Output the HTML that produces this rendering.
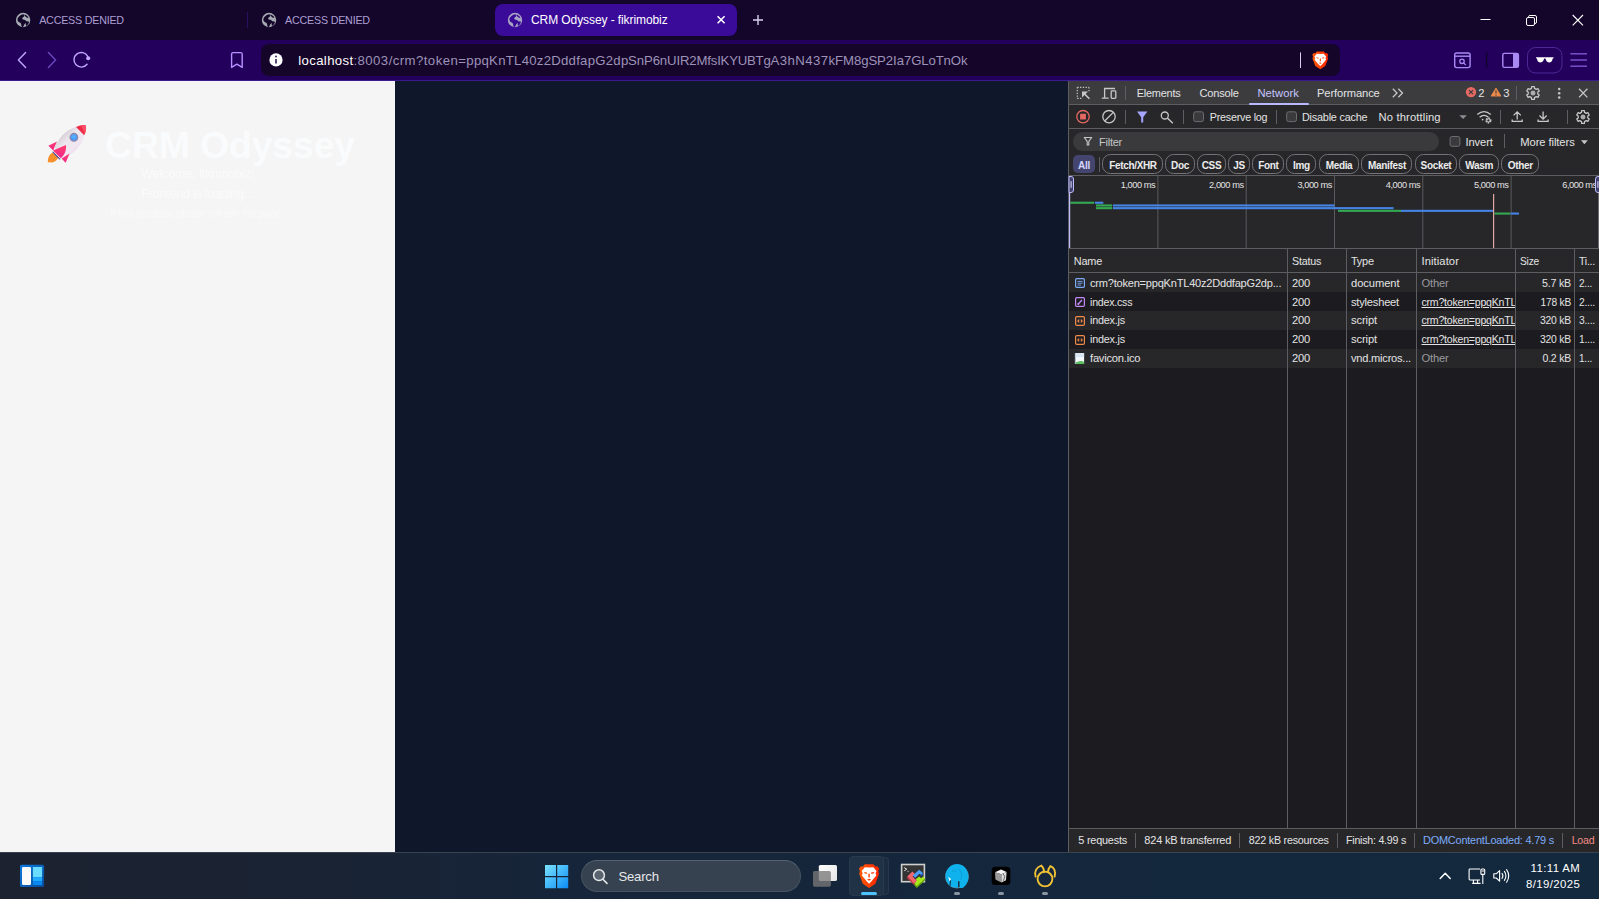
<!DOCTYPE html>
<html lang="en"><head><meta charset="utf-8"><title>CRM Odyssey - fikrimobiz</title><style>
html,body{margin:0;padding:0;}
body{width:1599px;height:899px;overflow:hidden;position:relative;background:#14052a;font-family:"Liberation Sans",sans-serif;}
.b{position:absolute;display:block;box-sizing:border-box;}
.t{position:absolute;display:block;white-space:nowrap;overflow:visible;}
</style></head><body>
<div class="b" style="left:0px;top:0px;width:1599px;height:40px;background:#14052a;"></div>
<div class="b" style="left:0px;top:40px;width:1599px;height:41px;background:#22005c;"></div>
<div class="b" style="left:0px;top:80px;width:1599px;height:1px;background:#3a1a8c;"></div>
<div class="b" style="left:495px;top:4px;width:242px;height:32px;background:#3a0a99;border-radius:8px;"></div>
<div class="b" style="left:247px;top:12px;width:1px;height:16px;background:#2a1060;"></div>
<div class="b" style="left:261px;top:44px;width:1079px;height:32px;background:#150529;border-radius:8px;"></div>
<span class="t" style="left:39.20px;top:12px;height:16px;line-height:16px;font-size:10.73px;color:#ac9fd2;letter-spacing:-0.219px;">ACCESS DENIED</span>
<span class="t" style="left:285.00px;top:12px;height:16px;line-height:16px;font-size:10.76px;color:#ac9fd2;letter-spacing:-0.223px;">ACCESS DENIED</span>
<span class="t" style="left:531.00px;top:11px;height:18px;line-height:18px;font-size:12px;color:#ffffff;letter-spacing:-0.087px;">CRM Odyssey - fikrimobiz</span>
<span class="t" style="left:298.3px;top:51px;height:19px;line-height:19px;font-size:13.2px;"><span style="color:#ffffff;letter-spacing:0.345px;">localhost</span><span style="color:#9d93b8;letter-spacing:0.435px;">:8003/crm?token=</span><span style="color:#9d93b8;letter-spacing:0.249px;">ppqKnTL40z2DddfapG2d</span><span style="color:#9d93b8;letter-spacing:-0.135px;">pSnP6nUIR2</span><span style="color:#9d93b8;letter-spacing:-0.218px;">MfsIKYUBTg</span><span style="color:#9d93b8;letter-spacing:0.422px;">A3hN437</span><span style="color:#9d93b8;letter-spacing:-0.086px;">kFM8gSP2Ia7</span><span style="color:#9d93b8;letter-spacing:-0.132px;">GLoTnOk</span></span>
<div class="b" style="left:0px;top:81px;width:395px;height:771px;background:#f5f5f5;"></div>
<div class="b" style="left:395px;top:81px;width:673px;height:771px;background:#0f172a;"></div>
<span class="t" style="left:105.00px;top:122px;height:46px;line-height:46px;font-size:37.54px;color:#fafbfc;letter-spacing:-0.222px;font-weight:700;">CRM Odyssey</span>
<span class="t" style="left:141.00px;top:164px;height:19px;line-height:19px;font-size:12.75px;color:#fafbfc;letter-spacing:-0.219px;">Welcome, fikrimobiz!</span>
<span class="t" style="left:141.50px;top:185px;height:18px;line-height:18px;font-size:12.51px;color:#fafbfc;letter-spacing:-0.220px;">Frontend is loading...</span>
<span class="t" style="left:110.00px;top:205px;height:16px;line-height:16px;font-size:10.5px;color:#f9fafb;letter-spacing:-0.221px;">If this persists, please refresh the page.</span>
<div class="b" style="left:1068px;top:81px;width:1px;height:771px;background:#5e5e62;"></div>
<div class="b" style="left:1069px;top:81px;width:530px;height:23px;background:#3c3c3f;"></div>
<div class="b" style="left:1069px;top:104px;width:530px;height:1px;background:#5e5e62;"></div>
<div class="b" style="left:1069px;top:105px;width:530px;height:23px;background:#27272a;"></div>
<div class="b" style="left:1069px;top:128px;width:530px;height:1px;background:#5e5e62;"></div>
<div class="b" style="left:1069px;top:129px;width:530px;height:47px;background:#27272a;"></div>
<div class="b" style="left:1069px;top:175px;width:530px;height:1px;background:#5e5e62;"></div>
<div class="b" style="left:1069px;top:176px;width:530px;height:72px;background:#27272a;"></div>
<div class="b" style="left:1069px;top:248px;width:530px;height:1px;background:#5e5e62;"></div>
<div class="b" style="left:1069px;top:249px;width:530px;height:23px;background:#27272a;"></div>
<div class="b" style="left:1069px;top:272px;width:530px;height:1px;background:#5e5e62;"></div>
<div class="b" style="left:1069px;top:273px;width:530px;height:555px;background:#1c1b1f;"></div>
<div class="b" style="left:1069px;top:273px;width:530px;height:19px;background:#27272a;"></div>
<div class="b" style="left:1069px;top:311px;width:530px;height:19px;background:#27272a;"></div>
<div class="b" style="left:1069px;top:349px;width:530px;height:19px;background:#27272a;"></div>
<div class="b" style="left:1069px;top:828px;width:530px;height:1px;background:#5e5e62;"></div>
<div class="b" style="left:1069px;top:829px;width:530px;height:23px;background:#27272a;"></div>
<span class="t" style="left:1136.70px;top:85px;height:16px;line-height:16px;font-size:10.95px;color:#e3e3e3;letter-spacing:-0.218px;">Elements</span>
<span class="t" style="left:1199.50px;top:85px;height:16px;line-height:16px;font-size:11.08px;color:#e3e3e3;letter-spacing:-0.222px;">Console</span>
<span class="t" style="left:1257.40px;top:85px;height:16px;line-height:16px;font-size:11.2px;color:#c6c6ff;letter-spacing:0.075px;">Network</span>
<span class="t" style="left:1317.00px;top:85px;height:16px;line-height:16px;font-size:11.2px;color:#e3e3e3;letter-spacing:-0.120px;">Performance</span>
<div class="b" style="left:1249px;top:103px;width:60px;height:2px;background:#b8b8ff;border-radius:1px;"></div>
<div class="b" style="left:1125px;top:86px;width:1px;height:14px;background:#5e5e62;"></div>
<div class="b" style="left:1516px;top:86px;width:1px;height:14px;background:#5e5e62;"></div>
<span class="t" style="left:1478.30px;top:85px;height:16px;line-height:16px;font-size:11.18px;color:#e3e3e3;letter-spacing:-0.218px;">2</span>
<span class="t" style="left:1503.30px;top:85px;height:16px;line-height:16px;font-size:11.18px;color:#e3e3e3;letter-spacing:-0.218px;">3</span>
<div class="b" style="left:1125px;top:110px;width:1px;height:14px;background:#5e5e62;"></div>
<div class="b" style="left:1183px;top:110px;width:1px;height:14px;background:#5e5e62;"></div>
<div class="b" style="left:1276px;top:110px;width:1px;height:14px;background:#5e5e62;"></div>
<div class="b" style="left:1500px;top:110px;width:1px;height:14px;background:#5e5e62;"></div>
<div class="b" style="left:1567px;top:110px;width:1px;height:14px;background:#5e5e62;"></div>
<span class="t" style="left:1209.80px;top:109px;height:16px;line-height:16px;font-size:10.71px;color:#e3e3e3;letter-spacing:-0.219px;">Preserve log</span>
<span class="t" style="left:1302.00px;top:109px;height:16px;line-height:16px;font-size:10.85px;color:#e3e3e3;letter-spacing:-0.219px;">Disable cache</span>
<span class="t" style="left:1378.60px;top:109px;height:16px;line-height:16px;font-size:11.2px;color:#e3e3e3;letter-spacing:0.140px;">No throttling</span>
<div class="b" style="left:1073px;top:132px;width:366px;height:19px;background:#3a3a3d;border-radius:9.5px;"></div>
<span class="t" style="left:1099.00px;top:134px;height:16px;line-height:16px;font-size:10.94px;color:#c7c7c7;letter-spacing:-0.218px;">Filter</span>
<span class="t" style="left:1465.60px;top:134px;height:16px;line-height:16px;font-size:11.2px;color:#e3e3e3;letter-spacing:-0.152px;">Invert</span>
<div class="b" style="left:1504px;top:134px;width:1px;height:14px;background:#5e5e62;"></div>
<span class="t" style="left:1520.30px;top:134px;height:16px;line-height:16px;font-size:11.2px;color:#e3e3e3;letter-spacing:-0.082px;">More filters</span>
<div class="b" style="left:1073px;top:155px;width:22px;height:18px;background:#44456e;border-radius:5px;"></div>
<span class="t" style="left:1078.12px;top:158px;height:15px;line-height:15px;font-size:10px;color:#d6d6ff;letter-spacing:-0.340px;font-weight:700;">All</span>
<div class="b" style="left:1099px;top:157px;width:1px;height:15px;background:#5e5e62;"></div>
<div class="b" style="left:1102px;top:154px;width:61px;height:20px;background:transparent;border:1px solid #747478;border-radius:8.5px;"></div>
<span class="t" style="left:1109.25px;top:158px;height:15px;line-height:15px;font-size:10px;color:#ececec;letter-spacing:-0.340px;font-weight:700;">Fetch/XHR</span>
<div class="b" style="left:1164.5px;top:154px;width:30.5px;height:20px;background:transparent;border:1px solid #747478;border-radius:8.5px;"></div>
<span class="t" style="left:1171.06px;top:158px;height:15px;line-height:15px;font-size:10px;color:#ececec;letter-spacing:-0.340px;font-weight:700;">Doc</span>
<div class="b" style="left:1196.5px;top:154px;width:29.0px;height:20px;background:transparent;border:1px solid #747478;border-radius:8.5px;"></div>
<span class="t" style="left:1201.73px;top:158px;height:15px;line-height:15px;font-size:10px;color:#ececec;letter-spacing:-0.340px;font-weight:700;">CSS</span>
<div class="b" style="left:1228px;top:154px;width:21.5px;height:20px;background:transparent;border:1px solid #747478;border-radius:8.5px;"></div>
<span class="t" style="left:1233.22px;top:158px;height:15px;line-height:15px;font-size:10px;color:#ececec;letter-spacing:-0.340px;font-weight:700;">JS</span>
<div class="b" style="left:1251.5px;top:154px;width:32.0px;height:20px;background:transparent;border:1px solid #747478;border-radius:8.5px;"></div>
<span class="t" style="left:1258.15px;top:158px;height:15px;line-height:15px;font-size:10px;color:#ececec;letter-spacing:-0.340px;font-weight:700;">Font</span>
<div class="b" style="left:1286px;top:154px;width:30px;height:20px;background:transparent;border:1px solid #747478;border-radius:8.5px;"></div>
<span class="t" style="left:1293.12px;top:158px;height:15px;line-height:15px;font-size:10px;color:#ececec;letter-spacing:-0.340px;font-weight:700;">Img</span>
<div class="b" style="left:1318.5px;top:154px;width:40.5px;height:20px;background:transparent;border:1px solid #747478;border-radius:8.5px;"></div>
<span class="t" style="left:1325.68px;top:158px;height:15px;line-height:15px;font-size:10px;color:#ececec;letter-spacing:-0.340px;font-weight:700;">Media</span>
<div class="b" style="left:1361px;top:154px;width:51px;height:20px;background:transparent;border:1px solid #747478;border-radius:8.5px;"></div>
<span class="t" style="left:1368.08px;top:158px;height:15px;line-height:15px;font-size:10px;color:#ececec;letter-spacing:-0.340px;font-weight:700;">Manifest</span>
<div class="b" style="left:1414.5px;top:154px;width:42.5px;height:20px;background:transparent;border:1px solid #747478;border-radius:8.5px;"></div>
<span class="t" style="left:1420.62px;top:158px;height:15px;line-height:15px;font-size:10px;color:#ececec;letter-spacing:-0.340px;font-weight:700;">Socket</span>
<div class="b" style="left:1459px;top:154px;width:39.5px;height:20px;background:transparent;border:1px solid #747478;border-radius:8.5px;"></div>
<span class="t" style="left:1465.34px;top:158px;height:15px;line-height:15px;font-size:10px;color:#ececec;letter-spacing:-0.340px;font-weight:700;">Wasm</span>
<div class="b" style="left:1500.5px;top:154px;width:38.5px;height:20px;background:transparent;border:1px solid #747478;border-radius:8.5px;"></div>
<span class="t" style="left:1507.72px;top:158px;height:15px;line-height:15px;font-size:10px;color:#ececec;letter-spacing:-0.340px;font-weight:700;">Other</span>
<span class="t" style="left:1120.80px;top:178px;height:14px;line-height:14px;font-size:9.24px;color:#e3e3e3;letter-spacing:-0.438px;">1,000 ms</span>
<span class="t" style="left:1209.10px;top:178px;height:14px;line-height:14px;font-size:9.24px;color:#e3e3e3;letter-spacing:-0.438px;">2,000 ms</span>
<span class="t" style="left:1297.40px;top:178px;height:14px;line-height:14px;font-size:9.24px;color:#e3e3e3;letter-spacing:-0.438px;">3,000 ms</span>
<span class="t" style="left:1385.70px;top:178px;height:14px;line-height:14px;font-size:9.24px;color:#e3e3e3;letter-spacing:-0.438px;">4,000 ms</span>
<span class="t" style="left:1474.00px;top:178px;height:14px;line-height:14px;font-size:9.24px;color:#e3e3e3;letter-spacing:-0.438px;">5,000 ms</span>
<span class="t" style="left:1562.30px;top:178px;height:14px;line-height:14px;font-size:9.24px;color:#e3e3e3;letter-spacing:-0.438px;">6,000 ms</span>
<svg class="b" style="left:0;top:0;" width="1599" height="899" viewBox="0 0 1599 899"><rect x="1157.40" y="176" width="1" height="72" fill="#5a5a5e"/><rect x="1245.70" y="176" width="1" height="72" fill="#5a5a5e"/><rect x="1334.00" y="176" width="1" height="72" fill="#5a5a5e"/><rect x="1422.30" y="176" width="1" height="72" fill="#5a5a5e"/><rect x="1510.60" y="176" width="1" height="72" fill="#5a5a5e"/><rect x="1070.3" y="201.7" width="23.90" height="2.1" fill="#34a853"/><rect x="1094.9" y="201.7" width="8.40" height="2.1" fill="#4584e4"/><rect x="1096" y="204.4" width="16.20" height="2.1" fill="#34a853"/><rect x="1113" y="204.4" width="221.60" height="2.1" fill="#4584e4"/><rect x="1096" y="207.1" width="16.20" height="2.1" fill="#34a853"/><rect x="1113" y="207.1" width="280.60" height="2.1" fill="#4584e4"/><rect x="1338" y="209.8" width="63.00" height="2.1" fill="#34a853"/><rect x="1401" y="209.8" width="92.00" height="2.1" fill="#4584e4"/><rect x="1494.4" y="212.5" width="15.80" height="2.1" fill="#34a853"/><rect x="1510.6" y="212.5" width="8.40" height="2.1" fill="#4584e4"/><rect x="1493" y="194" width="1.2" height="54" fill="#e2a9a4"/><rect x="1069" y="176" width="1.2" height="72" fill="#bcbcff"/><rect x="1598" y="176" width="1" height="72" fill="#6a6a70"/><path d="M1069 176.5H1071Q1073.5 176.5 1073.5 179V190Q1073.5 192.5 1071 192.5H1069Z" fill="#40406a" stroke="#bcbcff" stroke-width="1"/><rect x="1070.6" y="181.2" width="1" height="6.6" fill="#e0e0ff"/><path d="M1600 176.5H1598Q1595.5 176.5 1595.5 179V190Q1595.5 192.5 1598 192.5H1600Z" fill="#40406a" stroke="#bcbcff" stroke-width="1"/><rect x="1597.4" y="181.2" width="1" height="6.6" fill="#e0e0ff"/></svg>
<div class="b" style="left:1287px;top:249px;width:1px;height:579px;background:#5e5e62;"></div>
<div class="b" style="left:1346px;top:249px;width:1px;height:579px;background:#5e5e62;"></div>
<div class="b" style="left:1416px;top:249px;width:1px;height:579px;background:#5e5e62;"></div>
<div class="b" style="left:1515px;top:249px;width:1px;height:579px;background:#5e5e62;"></div>
<div class="b" style="left:1574px;top:249px;width:1px;height:579px;background:#5e5e62;"></div>
<span class="t" style="left:1073.80px;top:253px;height:16px;line-height:16px;font-size:10.9px;color:#e3e3e3;letter-spacing:-0.219px;">Name</span>
<span class="t" style="left:1292.00px;top:253px;height:16px;line-height:16px;font-size:10.73px;color:#e3e3e3;letter-spacing:-0.220px;">Status</span>
<span class="t" style="left:1351.00px;top:253px;height:16px;line-height:16px;font-size:10.92px;color:#e3e3e3;letter-spacing:-0.219px;">Type</span>
<span class="t" style="left:1421.50px;top:253px;height:16px;line-height:16px;font-size:11.2px;color:#e3e3e3;letter-spacing:0.086px;">Initiator</span>
<span class="t" style="left:1520.00px;top:254px;height:15px;line-height:15px;font-size:10.22px;color:#e3e3e3;letter-spacing:-0.220px;">Size</span>
<span class="t" style="left:1579.00px;top:254px;height:15px;line-height:15px;font-size:10.49px;color:#e3e3e3;letter-spacing:-0.218px;">Ti...</span>
<span class="t" style="left:1090.00px;top:275px;height:16px;line-height:16px;font-size:11.05px;color:#e3e3e3;letter-spacing:-0.218px;">crm?token=ppqKnTL40z2DddfapG2dp...</span>
<span class="t" style="left:1292.00px;top:275px;height:16px;line-height:16px;font-size:11.2px;color:#e3e3e3;letter-spacing:-0.162px;">200</span>
<span class="t" style="left:1351.00px;top:275px;height:16px;line-height:16px;font-size:11.2px;color:#e3e3e3;letter-spacing:-0.073px;">document</span>
<span class="t" style="left:1421.50px;top:275px;height:16px;line-height:16px;font-size:11.2px;color:#9a9a9e;letter-spacing:-0.202px;">Other</span>
<span class="t" style="left:1542.00px;top:275px;height:16px;line-height:16px;font-size:10.7px;color:#e3e3e3;letter-spacing:-0.222px;">5.7 kB</span>
<span class="t" style="left:1579.00px;top:276px;height:15px;line-height:15px;font-size:9.99px;color:#e3e3e3;letter-spacing:-0.221px;">2...</span>
<span class="t" style="left:1090.00px;top:294px;height:16px;line-height:16px;font-size:10.62px;color:#e3e3e3;letter-spacing:-0.219px;">index.css</span>
<span class="t" style="left:1292.00px;top:294px;height:16px;line-height:16px;font-size:11.2px;color:#e3e3e3;letter-spacing:-0.162px;">200</span>
<span class="t" style="left:1351.00px;top:294px;height:16px;line-height:16px;font-size:11.15px;color:#e3e3e3;letter-spacing:-0.220px;">stylesheet</span>
<div class="b" style="left:1417px;top:292.0px;width:98px;height:19px;overflow:hidden;">
<span class="t" style="left:4.50px;top:2px;height:16px;line-height:16px;font-size:10.57px;color:#e3e3e3;letter-spacing:-0.219px;text-decoration:underline;">crm?token=ppqKnTL40z2DddfapG2dp</span>
</div>
<span class="t" style="left:1540.50px;top:295px;height:15px;line-height:15px;font-size:10.22px;color:#e3e3e3;letter-spacing:-0.220px;">178 kB</span>
<span class="t" style="left:1579.00px;top:295px;height:15px;line-height:15px;font-size:10.26px;color:#e3e3e3;letter-spacing:-0.222px;">2....</span>
<span class="t" style="left:1090.00px;top:312px;height:16px;line-height:16px;font-size:10.84px;color:#e3e3e3;letter-spacing:-0.219px;">index.js</span>
<span class="t" style="left:1292.00px;top:312px;height:16px;line-height:16px;font-size:11.2px;color:#e3e3e3;letter-spacing:-0.162px;">200</span>
<span class="t" style="left:1351.00px;top:312px;height:16px;line-height:16px;font-size:11.2px;color:#e3e3e3;letter-spacing:-0.126px;">script</span>
<div class="b" style="left:1417px;top:311.0px;width:98px;height:19px;overflow:hidden;">
<span class="t" style="left:4.50px;top:1px;height:16px;line-height:16px;font-size:10.57px;color:#e3e3e3;letter-spacing:-0.219px;text-decoration:underline;">crm?token=ppqKnTL40z2DddfapG2dp</span>
</div>
<span class="t" style="left:1540.00px;top:313px;height:15px;line-height:15px;font-size:10.38px;color:#e3e3e3;letter-spacing:-0.219px;">320 kB</span>
<span class="t" style="left:1579.00px;top:313px;height:15px;line-height:15px;font-size:10.26px;color:#e3e3e3;letter-spacing:-0.222px;">3....</span>
<span class="t" style="left:1090.00px;top:331px;height:16px;line-height:16px;font-size:10.84px;color:#e3e3e3;letter-spacing:-0.219px;">index.js</span>
<span class="t" style="left:1292.00px;top:331px;height:16px;line-height:16px;font-size:11.2px;color:#e3e3e3;letter-spacing:-0.162px;">200</span>
<span class="t" style="left:1351.00px;top:331px;height:16px;line-height:16px;font-size:11.2px;color:#e3e3e3;letter-spacing:-0.126px;">script</span>
<div class="b" style="left:1417px;top:330.0px;width:98px;height:19px;overflow:hidden;">
<span class="t" style="left:4.50px;top:1px;height:16px;line-height:16px;font-size:10.57px;color:#e3e3e3;letter-spacing:-0.219px;text-decoration:underline;">crm?token=ppqKnTL40z2DddfapG2dp</span>
</div>
<span class="t" style="left:1540.00px;top:332px;height:15px;line-height:15px;font-size:10.38px;color:#e3e3e3;letter-spacing:-0.219px;">320 kB</span>
<span class="t" style="left:1579.00px;top:332px;height:15px;line-height:15px;font-size:10.26px;color:#e3e3e3;letter-spacing:-0.222px;">1....</span>
<span class="t" style="left:1090.00px;top:350px;height:16px;line-height:16px;font-size:11.16px;color:#e3e3e3;letter-spacing:-0.221px;">favicon.ico</span>
<span class="t" style="left:1292.00px;top:350px;height:16px;line-height:16px;font-size:11.2px;color:#e3e3e3;letter-spacing:-0.162px;">200</span>
<span class="t" style="left:1351.00px;top:350px;height:16px;line-height:16px;font-size:11.09px;color:#e3e3e3;letter-spacing:-0.220px;">vnd.micros...</span>
<span class="t" style="left:1421.50px;top:350px;height:16px;line-height:16px;font-size:11.2px;color:#9a9a9e;letter-spacing:-0.202px;">Other</span>
<span class="t" style="left:1542.50px;top:350px;height:16px;line-height:16px;font-size:10.52px;color:#e3e3e3;letter-spacing:-0.221px;">0.2 kB</span>
<span class="t" style="left:1579.00px;top:351px;height:15px;line-height:15px;font-size:9.99px;color:#e3e3e3;letter-spacing:-0.221px;">1...</span>
<span class="t" style="left:1078.30px;top:832px;height:16px;line-height:16px;font-size:10.9px;color:#e3e3e3;letter-spacing:-0.220px;">5 requests</span>
<span class="t" style="left:1144.30px;top:832px;height:16px;line-height:16px;font-size:11.06px;color:#e3e3e3;letter-spacing:-0.221px;">824 kB transferred</span>
<span class="t" style="left:1248.80px;top:832px;height:16px;line-height:16px;font-size:10.73px;color:#e3e3e3;letter-spacing:-0.219px;">822 kB resources</span>
<span class="t" style="left:1346.00px;top:832px;height:16px;line-height:16px;font-size:10.61px;color:#e3e3e3;letter-spacing:-0.221px;">Finish: 4.99 s</span>
<span class="t" style="left:1423.00px;top:832px;height:16px;line-height:16px;font-size:10.95px;color:#7cacf8;letter-spacing:-0.219px;">DOMContentLoaded: 4.79 s</span>
<span class="t" style="left:1571.70px;top:832px;height:16px;line-height:16px;font-size:10.55px;color:#f28b82;letter-spacing:-0.217px;">Load</span>
<div class="b" style="left:1135px;top:833px;width:1px;height:15px;background:#5e5e62;"></div>
<div class="b" style="left:1239px;top:833px;width:1px;height:15px;background:#5e5e62;"></div>
<div class="b" style="left:1337px;top:833px;width:1px;height:15px;background:#5e5e62;"></div>
<div class="b" style="left:1414px;top:833px;width:1px;height:15px;background:#5e5e62;"></div>
<div class="b" style="left:1562px;top:833px;width:1px;height:15px;background:#5e5e62;"></div>
<div class="b" style="left:0px;top:852px;width:1599px;height:47px;background:#1b2431;background:linear-gradient(90deg,#1c2230 0%,#1a2333 18%,#16253a 36%,#14273c 65%,#13293e 100%);"></div>
<div class="b" style="left:0px;top:852px;width:1599px;height:1px;background:#3a4450;"></div>
<div class="b" style="left:581px;top:860px;width:220px;height:32px;background:#36424f;border-radius:16px;border:1px solid #465260;border-top-color:#566270;"></div>
<span class="t" style="left:618.40px;top:867px;height:19px;line-height:19px;font-size:13.17px;color:#e6e8ea;letter-spacing:-0.221px;">Search</span>
<span class="t" style="left:1530.60px;top:860px;height:16px;line-height:16px;font-size:11.4px;color:#ffffff;letter-spacing:0.403px;">11:11 AM</span>
<span class="t" style="left:1526.00px;top:876px;height:16px;line-height:16px;font-size:11.4px;color:#ffffff;letter-spacing:0.398px;">8/19/2025</span>
<div class="b" style="left:883px;top:857px;width:6px;height:38px;background:#1b2c40;border-radius:0 4px 4px 0;border:1px solid #26384b;border-left:none;"></div>
<div class="b" style="left:849px;top:856px;width:35px;height:40px;background:#203246;border-radius:4px;border:1px solid #283a4e;"></div>
<div class="b" style="left:861px;top:892px;width:16px;height:3px;background:#4cc2ff;border-radius:1.5px;"></div>
<div class="b" style="left:954px;top:892px;width:6px;height:3px;background:#8a95a2;border-radius:1.5px;"></div>
<div class="b" style="left:998px;top:892px;width:6px;height:3px;background:#8a95a2;border-radius:1.5px;"></div>
<div class="b" style="left:1042px;top:892px;width:6px;height:3px;background:#8a95a2;border-radius:1.5px;"></div>
<svg class="b" style="left:0;top:0;" width="1599" height="899" viewBox="0 0 1599 899"><path d="M1077.3 87.3H1089M1077.3 87.3V98.4M1089 87.3V91.5M1077.3 98.4H1081.5" fill="none" stroke="#c7c7c7" stroke-width="1.2" stroke-dasharray="1.3 1.45"/><path d="M1089.4 98.8L1084 93.4" fill="none" stroke="#c7c7c7" stroke-width="1.5"/><path d="M1082 91.6H1088L1082 97.6Z" fill="#c7c7c7"/><path d="M1115 88.5H1104.6V97.9M1101.8 98.1H1108.6" fill="none" stroke="#c7c7c7" stroke-width="1.3"/><rect x="1111.2" y="90.9" width="4.6" height="7.4" rx="0.8" fill="none" stroke="#c7c7c7" stroke-width="1.3"/><path d="M1392.8 88.8L1397 93L1392.8 97.2M1398.3 88.8L1402.5 93L1398.3 97.2" fill="none" stroke="#c7c7c7" stroke-width="1.3"/><circle cx="1471" cy="92.1" r="5.2" fill="#e46962"/><path d="M1469 90.1L1473 94.1M1473 90.1L1469 94.1" stroke="#3c3c3f" stroke-width="1.2" fill="none"/><path d="M1496 88.1L1500.9 96.1H1491.1Z" fill="#ee8a4a" stroke="#ee8a4a" stroke-width="0.8" stroke-linejoin="round"/><path d="M1496 90.3V93.6M1496 94.7V95.7" stroke="#3c3c3f" stroke-width="1.1" fill="none"/><path d="M1531.49 88.36 L1531.63 86.54 L1534.37 86.54 L1534.51 88.36 L1536.27 89.37 L1537.90 88.58 L1539.28 90.96 L1537.78 91.98 L1537.78 94.02 L1539.28 95.04 L1537.90 97.42 L1536.27 96.63 L1534.51 97.64 L1534.37 99.46 L1531.63 99.46 L1531.49 97.64 L1529.73 96.63 L1528.10 97.42 L1526.72 95.04 L1528.22 94.02 L1528.22 91.98 L1526.72 90.96 L1528.10 88.58 L1529.73 89.37Z" fill="none" stroke="#c7c7c7" stroke-width="1.25" stroke-linejoin="round"/><circle cx="1533" cy="93" r="2.05" fill="#c7c7c7" fill-opacity=".8" stroke="#c7c7c7" stroke-width="0.75"/><path d="M1581.49 112.36 L1581.63 110.54 L1584.37 110.54 L1584.51 112.36 L1586.27 113.37 L1587.90 112.58 L1589.28 114.96 L1587.78 115.98 L1587.78 118.02 L1589.28 119.04 L1587.90 121.42 L1586.27 120.63 L1584.51 121.64 L1584.37 123.46 L1581.63 123.46 L1581.49 121.64 L1579.73 120.63 L1578.10 121.42 L1576.72 119.04 L1578.22 118.02 L1578.22 115.98 L1576.72 114.96 L1578.10 112.58 L1579.73 113.37Z" fill="none" stroke="#c7c7c7" stroke-width="1.25" stroke-linejoin="round"/><circle cx="1583" cy="117" r="2.05" fill="#c7c7c7" fill-opacity=".8" stroke="#c7c7c7" stroke-width="0.75"/><circle cx="1559.2" cy="89" r="1.25" fill="#c7c7c7"/><circle cx="1559.2" cy="93.3" r="1.25" fill="#c7c7c7"/><circle cx="1559.2" cy="97.6" r="1.25" fill="#c7c7c7"/><path d="M1579 88.8L1587.4 97.4M1587.4 88.8L1579 97.4" stroke="#c7c7c7" stroke-width="1.25" fill="none"/><circle cx="1083" cy="116.7" r="6.2" fill="none" stroke="#e46962" stroke-width="1.3"/><rect x="1080.1" y="113.8" width="5.8" height="5.8" rx="0.6" fill="#e46962"/><circle cx="1109" cy="116.7" r="6.2" fill="none" stroke="#c7c7c7" stroke-width="1.3"/><path d="M1104.7 121L1113.3 112.4" stroke="#c7c7c7" stroke-width="1.3"/><path d="M1137 111.6H1147.4L1143.2 117.2V122.4H1141.2V117.2Z" fill="#a5a5ff"/><circle cx="1164.8" cy="115.5" r="3.5" fill="none" stroke="#c7c7c7" stroke-width="1.3"/><path d="M1167.4 118.1L1172.8 123.3" stroke="#c7c7c7" stroke-width="1.4"/><rect x="1193.7" y="111.8" width="9.8" height="9.8" rx="2" fill="#3a3a3d" stroke="#6e6e72" stroke-width="1"/><rect x="1286.7" y="111.8" width="9.8" height="9.8" rx="2" fill="#3a3a3d" stroke="#6e6e72" stroke-width="1"/><rect x="1450.1" y="136.5" width="9.8" height="9.8" rx="2" fill="#3a3a3d" stroke="#6e6e72" stroke-width="1"/><path d="M1459.4 115.2H1466.8L1463.1 118.9Z" fill="#8f8f93"/><path d="M1581 140.2H1587.8L1584.4 144.2Z" fill="#c7c7c7"/><path d="M1477.3 114.6Q1484 108.6 1490.7 114.6M1479.6 117.3Q1484 113.5 1488.4 117.3" fill="none" stroke="#c7c7c7" stroke-width="1.3"/><circle cx="1482.6" cy="119.6" r="0.9" fill="#c7c7c7"/><circle cx="1488.4" cy="120.4" r="2.2" fill="none" stroke="#c7c7c7" stroke-width="1.7" stroke-dasharray="1.5 0.8"/><circle cx="1488.4" cy="120.4" r="1.5" fill="none" stroke="#c7c7c7" stroke-width="0.9"/><path d="M1517.2 119.5V112M1513.6 115.4L1517.2 111.8L1520.8 115.4M1512.2 119.6V121.4H1522.2V119.6" fill="none" stroke="#c7c7c7" stroke-width="1.3"/><path d="M1543.1 111.4V118.9M1539.5 115.5L1543.1 119.1L1546.7 115.5M1538.1 119.6V121.4H1548.1V119.6" fill="none" stroke="#c7c7c7" stroke-width="1.3"/><path d="M1084.3 137.5H1091.7L1088.8 141.4V145H1087.2V141.4Z" fill="none" stroke="#c7c7c7" stroke-width="1.1" stroke-linejoin="round"/><rect x="1075.6" y="278.6" width="8.8" height="8.8" rx="1.2" fill="none" stroke="#7cacf8" stroke-width="1.2"/><path d="M1077.5 281.4H1082.5M1077.5 283.2H1082.5M1077.5 285H1081" stroke="#7cacf8" stroke-width="0.9"/><rect x="1075.6" y="297.6" width="8.8" height="8.8" rx="1.2" fill="none" stroke="#c58af9" stroke-width="1.2"/><path d="M1078 304.2L1082 300" stroke="#c58af9" stroke-width="1.3"/><circle cx="1078.3" cy="303.9" r="1" fill="#c58af9"/><rect x="1075.6" y="316.6" width="8.8" height="8.8" rx="1.2" fill="none" stroke="#ee8a4a" stroke-width="1.2"/><path d="M1079.2 319.6L1077.8 321L1079.2 322.4M1080.8 319.6L1082.2 321L1080.8 322.4" fill="none" stroke="#ee8a4a" stroke-width="1.1"/><rect x="1075.6" y="335.6" width="8.8" height="8.8" rx="1.2" fill="none" stroke="#ee8a4a" stroke-width="1.2"/><path d="M1079.2 338.6L1077.8 340L1079.2 341.4M1080.8 338.6L1082.2 340L1080.8 341.4" fill="none" stroke="#ee8a4a" stroke-width="1.1"/><rect x="1075.3" y="353" width="8.8" height="11" fill="#f4f7fb"/><rect x="1075.3" y="353" width="8.8" height="4" fill="#dbe6f3"/><path d="M1075.3 364V362.6L1080 361Q1082.6 360.6 1084.1 362V364Z" fill="#5fc05f"/><path d="M1075.3 353V364" stroke="#b9c3cf" stroke-width=".8"/></svg>
<svg class="b" style="left:0;top:0;" width="1599" height="899" viewBox="0 0 1599 899"><circle cx="23.1" cy="20" r="7.2" fill="#a6abb3"/><path d="M17.5 18.8c1.2-2.6 3.2-4.2 5.6-4.6c1 .1 1.6 .9 1.2 1.8c-.4 1-1.6 1.2-2 2.2c-.3 .9 .6 1.4 1.6 1.5c1.6 .1 2.6 1 2.4 2.4c-.2 1.2-1.6 1.6-2.2 2.6c-.5 .9-.3 2-1.4 2.2c-1 .1-1.4-1-1.4-2c0-1.2-.6-2-1.6-2.4c-1.2-.5-2.6-1.6-2.2-3.7z" fill="#14052a"/><path d="M25.3 21.6c1.2-.6 2.8-.4 3.8 .2c-.3 1.6-1.2 3-2.5 4c-.9-.6-1-1.6-.7-2.4c-.5-.5-1-1.1-.6-1.8z" fill="#14052a"/><path d="M24.700000000000003 14.6c1.6 .5 3 1.6 3.8 3c-1 .4-2.2 .1-2.8-.8c-.5-.7-1.4-1.2-1-2.2z" fill="#14052a"/><circle cx="269" cy="20" r="7.2" fill="#a6abb3"/><path d="M263.4 18.8c1.2-2.6 3.2-4.2 5.6-4.6c1 .1 1.6 .9 1.2 1.8c-.4 1-1.6 1.2-2 2.2c-.3 .9 .6 1.4 1.6 1.5c1.6 .1 2.6 1 2.4 2.4c-.2 1.2-1.6 1.6-2.2 2.6c-.5 .9-.3 2-1.4 2.2c-1 .1-1.4-1-1.4-2c0-1.2-.6-2-1.6-2.4c-1.2-.5-2.6-1.6-2.2-3.7z" fill="#14052a"/><path d="M271.2 21.6c1.2-.6 2.8-.4 3.8 .2c-.3 1.6-1.2 3-2.5 4c-.9-.6-1-1.6-.7-2.4c-.5-.5-1-1.1-.6-1.8z" fill="#14052a"/><path d="M270.6 14.6c1.6 .5 3 1.6 3.8 3c-1 .4-2.2 .1-2.8-.8c-.5-.7-1.4-1.2-1-2.2z" fill="#14052a"/><circle cx="515" cy="20" r="7.2" fill="#a9a6c4"/><path d="M509.4 18.8c1.2-2.6 3.2-4.2 5.6-4.6c1 .1 1.6 .9 1.2 1.8c-.4 1-1.6 1.2-2 2.2c-.3 .9 .6 1.4 1.6 1.5c1.6 .1 2.6 1 2.4 2.4c-.2 1.2-1.6 1.6-2.2 2.6c-.5 .9-.3 2-1.4 2.2c-1 .1-1.4-1-1.4-2c0-1.2-.6-2-1.6-2.4c-1.2-.5-2.6-1.6-2.2-3.7z" fill="#3a0a99"/><path d="M517.2 21.6c1.2-.6 2.8-.4 3.8 .2c-.3 1.6-1.2 3-2.5 4c-.9-.6-1-1.6-.7-2.4c-.5-.5-1-1.1-.6-1.8z" fill="#3a0a99"/><path d="M516.6 14.6c1.6 .5 3 1.6 3.8 3c-1 .4-2.2 .1-2.8-.8c-.5-.7-1.4-1.2-1-2.2z" fill="#3a0a99"/><path d="M717.6 16.3L724.6 23.3M724.6 16.3L717.6 23.3" stroke="#fff" stroke-width="1.6" fill="none"/><path d="M753 20H763M758 15V25" stroke="#d8d0ee" stroke-width="1.4" fill="none"/><path d="M1480.5 19.5H1490.5" stroke="#fff" stroke-width="1" fill="none"/><rect x="1526.5" y="17.5" width="8" height="8" rx="1.5" fill="none" stroke="#fff" stroke-width="1"/><path d="M1528.5 17.5V16.8Q1528.5 15.5 1530 15.5H1535Q1536.5 15.5 1536.5 17V22Q1536.5 23.5 1535 23.5H1534.5" fill="none" stroke="#fff" stroke-width="1"/><path d="M1572.7 15L1583 25.3M1583 15L1572.7 25.3" stroke="#fff" stroke-width="1.1" fill="none"/><path d="M25.6 52.6L18.4 60L25.6 67.4" fill="none" stroke="#c2a8ff" stroke-width="1.4" stroke-linecap="round" stroke-linejoin="round"/><path d="M48.4 52.6L55.6 60L48.4 67.4" fill="none" stroke="#6a47bd" stroke-width="1.4" stroke-linecap="round" stroke-linejoin="round"/><path d="M87.05 64.29A7.3 7.3 0 1 1 87.75 56.37" fill="none" stroke="#c2a8ff" stroke-width="1.4" stroke-linecap="round"/><circle cx="88.2" cy="58.2" r="2" fill="#c2a8ff"/><path d="M231.6 67.4V54.2Q231.6 52.6 233.2 52.6H240.6Q242.2 52.6 242.2 54.2V67.4L236.9 64.2Z" fill="none" stroke="#b492ff" stroke-width="1.4" stroke-linejoin="round"/><circle cx="276" cy="59.9" r="6.6" fill="#fff"/><path d="M276 59V63.6" stroke="#3a2a5a" stroke-width="1.7" fill="none"/><circle cx="276" cy="56.6" r="1" fill="#3a2a5a"/><path d="M1300.5 52.4V68" stroke="#d8d0ee" stroke-width="1" fill="none"/><defs><linearGradient id="bg1" x1="0" y1="0" x2="1" y2="0"><stop offset="0" stop-color="#ff5a05"/><stop offset="1" stop-color="#ff2300"/></linearGradient></defs><g transform="translate(1312 51) scale(0.7545 0.7360)"><path d="M6.5 0.6H15.5L17.6 3L19.6 2.6L21.6 5.2L20.6 7.6L21.4 10.2L17.6 20.4L11 24.8L4.4 20.4L0.6 10.2L1.4 7.6L0.4 5.2L2.4 2.6L4.4 3Z" fill="url(#bg1)"/><path d="M11 4L15.4 3.6L18.8 7.4L17.8 9.8L18.6 12L15 16.2L13.6 18L11 20.4L8.4 18L7 16.2L3.4 12L4.2 9.8L3.2 7.4L6.6 3.6Z" fill="#fff"/><path d="M5.4 8.6L8.8 9.1L9.2 10L6.8 10.3ZM16.6 8.6L13.2 9.1L12.8 10L15.2 10.3ZM10.3 10.6L11 9.8L11.7 10.6L11.8 13.6L11 14.4L10.2 13.6ZM8.8 16.2L11 15.5L13.2 16.2L11 17.4Z" fill="url(#bg1)"/></g><rect x="1454.7" y="53" width="15.4" height="14.6" rx="2" fill="none" stroke="#a98af5" stroke-width="1.4"/><path d="M1454.7 56.2H1470.1" stroke="#a98af5" stroke-width="1.4"/><circle cx="1462" cy="61.3" r="2.2" fill="none" stroke="#a98af5" stroke-width="1.3"/><path d="M1463.6 62.9L1465.8 65.1" stroke="#a98af5" stroke-width="1.3"/><path d="M1486.5 52.4V68" stroke="#12042a" stroke-width="1.4" fill="none"/><rect x="1502.8" y="53.4" width="15.6" height="14" rx="1.6" fill="none" stroke="#a98af5" stroke-width="1.4"/><path d="M1513 53.4H1516.8Q1518.4 53.4 1518.4 55V65.8Q1518.4 67.4 1516.8 67.4H1513Z" fill="#a98af5"/><rect x="1527.5" y="47.5" width="34.5" height="25.5" rx="8" fill="none" stroke="#4b2a96" stroke-width="1"/><path d="M1536 57.2H1553.6L1553.4 58.4L1552.6 58.6Q1552.4 62.2 1549.6 62.4Q1546.6 62.4 1545.8 59.4L1545.4 58.6H1544.2L1543.8 59.4Q1543 62.4 1540 62.4Q1537.2 62.2 1537 58.6L1536.2 58.4Z" fill="#fff"/><path d="M1570.4 53.8H1587" stroke="#7650c8" stroke-width="1.5"/><path d="M1570.4 60H1587" stroke="#7650c8" stroke-width="1.5"/><path d="M1570.4 66.2H1587" stroke="#7650c8" stroke-width="1.5"/><defs><linearGradient id="rb" x1="0.1" y1="0.1" x2=".9" y2=".9"><stop offset="0" stop-color="#c4bbc6"/><stop offset=".42" stop-color="#ece6ed"/><stop offset=".7" stop-color="#f1e6f2"/><stop offset="1" stop-color="#dcc2e2"/></linearGradient><linearGradient id="rf" x1="0" y1="0" x2="0" y2="1"><stop offset="0" stop-color="#ff3d6e"/><stop offset="1" stop-color="#f0268a"/></linearGradient><radialGradient id="rw" cx=".5" cy=".4" r=".6"><stop offset="0" stop-color="#58b8ff"/><stop offset="1" stop-color="#3f8dfa"/></radialGradient></defs><g transform="translate(40 115)"><path d="M12.6 37.6C9.2 39.4 7.6 43.2 7.8 47.6C9.2 47.2 10.2 47.4 11 47.4C12 47.8 13.2 47.6 14.2 46.8C16 46 17.6 44.4 18.2 42.6Z" fill="#f5902a"/><path d="M17 26.6L8.4 30.8L13.2 35.6Z" fill="url(#rf)"/><path d="M36.6 11.8C29 13.6 20.4 20 14.4 32.4L25 42.6C36 37 42.4 28.4 44.6 20Z" fill="url(#rb)"/><path d="M36 12C39.4 10.2 43 9.6 45.6 10.2C46.6 13 46 16.6 44.2 20.2Z" fill="#ee2a48"/><path d="M41 10.8C43 10 44.6 10 45.6 10.2C46.4 12.6 46.2 15.4 45 18.4Z" fill="#fb5068"/><circle cx="33.9" cy="22.3" r="3.8" fill="url(#rw)" stroke="#8e88a8" stroke-width="1.3"/><path d="M12.8 36.2L14 37.6L20.6 44.2L19.4 44.6L12.6 37.6Z" fill="#3a3a98"/><path d="M26 30L13 35.4L20.8 43.2C24.2 40.6 26.6 35.6 26 30Z" fill="url(#rf)"/><path d="M29.6 38.6L21.6 43.4L25.6 47.8Z" fill="url(#rf)"/></g></svg>
<svg class="b" style="left:0;top:0;" width="1599" height="899" viewBox="0 0 1599 899"><defs><linearGradient id="wl" x1="0" y1="0" x2="1" y2="1"><stop offset="0" stop-color="#7be3ff"/><stop offset="1" stop-color="#0a8cf5"/></linearGradient><linearGradient id="wf" x1="0" y1="0" x2="1" y2="1"><stop offset="0" stop-color="#0a7be0"/><stop offset="1" stop-color="#0a4c98"/></linearGradient><linearGradient id="tw" x1="0" y1="0" x2="1" y2="1"><stop offset="0" stop-color="#ffffff"/><stop offset="1" stop-color="#e4e4e4"/></linearGradient></defs><rect x="20" y="864.8" width="24.1" height="22.3" rx="1.6" fill="url(#wf)"/><rect x="22" y="867" width="9" height="18" rx="1.2" fill="#fbfafa"/><rect x="32.9" y="867" width="9.2" height="10.2" fill="#6adcff"/><rect x="32.9" y="877.2" width="9.2" height="4" fill="#1eaaff"/><rect x="32.9" y="881.2" width="9.2" height="3.8" fill="#0a88f0"/><path d="M545 865H556V876H545ZM557.2 865H568.2V876H557.2ZM545 877.2H556V888.2H545ZM557.2 877.2H568.2V888.2H557.2Z" fill="url(#wl)"/><circle cx="599" cy="875.2" r="5.4" fill="rgba(120,130,142,.55)" stroke="#e4e6e8" stroke-width="1.5"/><path d="M602.9 879.3L607 883.4" stroke="#e4e6e8" stroke-width="1.6" stroke-linecap="round"/><rect x="818.8" y="864.9" width="18.2" height="16.2" rx="1.6" fill="url(#tw)"/><rect x="813" y="871" width="17.9" height="15.7" rx="1.6" fill="rgba(120,120,120,.78)"/><defs><linearGradient id="bg2" x1="0" y1="0" x2="1" y2="0"><stop offset="0" stop-color="#ff5a05"/><stop offset="1" stop-color="#ff2300"/></linearGradient></defs><g transform="translate(858.6 863.6) scale(0.9545 0.9840)"><path d="M6.5 0.6H15.5L17.6 3L19.6 2.6L21.6 5.2L20.6 7.6L21.4 10.2L17.6 20.4L11 24.8L4.4 20.4L0.6 10.2L1.4 7.6L0.4 5.2L2.4 2.6L4.4 3Z" fill="url(#bg2)"/><path d="M11 4L15.4 3.6L18.8 7.4L17.8 9.8L18.6 12L15 16.2L13.6 18L11 20.4L8.4 18L7 16.2L3.4 12L4.2 9.8L3.2 7.4L6.6 3.6Z" fill="#fff"/><path d="M5.4 8.6L8.8 9.1L9.2 10L6.8 10.3ZM16.6 8.6L13.2 9.1L12.8 10L15.2 10.3ZM10.3 10.6L11 9.8L11.7 10.6L11.8 13.6L11 14.4L10.2 13.6ZM8.8 16.2L11 15.5L13.2 16.2L11 17.4Z" fill="url(#bg2)"/></g><rect x="901.6" y="864.5" width="22.8" height="17.2" fill="#343434" stroke="#cfcfcf" stroke-width="1.6"/><path d="M904.2 867.6L906.8 869.2L904.2 870.8" fill="none" stroke="#e8e8e8" stroke-width="1"/><path d="M907.4 871.4H908.6" stroke="#bdbdbd" stroke-width="1"/><path d="M907.2 876.4L912.4 871.4L915 874L912.6 876.6L917 881L914.4 883.8Z" fill="#f2636c"/><path d="M907.2 876.4L914.4 883.8V885.6L907.2 878.2Z" fill="#c23846"/><path d="M912.6 875.6L919.2 869.8L923 873L921 875L919.4 873.8L915.4 877.8Z" fill="#4a9cfa"/><path d="M921 875L923 873V874.8L921.4 876.4Z" fill="#1858cc"/><path d="M914.4 883.8L917 881L915.6 879.6L919 876.4L921.2 878.2L923 876.6L925 878.6L916.8 886.6Z" fill="#a4ea14"/><path d="M914.4 883.8L916.8 886.6V888L914.4 885.4ZM916.8 886.6L925 878.6V880.4L916.8 888Z" fill="#6aa80e"/><circle cx="957" cy="876.6" r="11.4" fill="none" stroke="#7d8792" stroke-width=".9"/><path d="M945.4 876.6C945.4 869.5 950.5 864 957 864C963.5 864 968.5 869.5 968.5 876.6C968.5 881 966.5 885.5 962.6 888.1L959.5 888.1V881.6Q958.8 880.6 958.1 881.6V888.1L951 887C947.5 884.5 945.4 880.8 945.4 876.6Z" fill="#10b2ed"/><path d="M950.4 879.6L950 886.4" stroke="#12263a" stroke-width="1"/><path d="M948.2 876.8L951 879L949.6 881.6Z" fill="#ffffff"/><path d="M952 871.4Q954 870 956 871.4M958.6 868.6C962 871.6 962.4 876 960.4 879.6" fill="none" stroke="#0a98d0" stroke-width=".8"/><rect x="991.7" y="866.8" width="18.6" height="18.3" rx="3.6" fill="#000"/><path d="M995 872.2L1001 869.4L1006.6 872L1001.4 874.2Z" fill="#f4f4f4"/><path d="M995 872.2L1001.4 874.2V882.6L995.4 879.6Z" fill="#9a9a9a"/><path d="M1001.4 874.2L1006.6 872L1006 880.2L1001.4 882.6Z" fill="#dcdcdc"/><path d="M1003 873.6L1004.8 876.6L1003.4 880.8" fill="none" stroke="#5a5a5a" stroke-width=".9"/><circle cx="1045" cy="879" r="7.4" fill="none" stroke="#efc234" stroke-width="1.9"/><path d="M1035.6 876.6C1034 871.6 1036.6 866.8 1041.4 865.6C1043.4 867.6 1044.2 870 1044 872.2" fill="none" stroke="#efc234" stroke-width="1.9" stroke-linecap="round"/><path d="M1054.6 876.6C1056.2 871.6 1054 867.4 1050.4 866.2C1048.8 868 1048 870.2 1048 872.2" fill="none" stroke="#efc234" stroke-width="1.9" stroke-linecap="round"/><path d="M1440.2 878.4L1445.2 873.2L1450.2 878.4" fill="none" stroke="#fff" stroke-width="1.5" stroke-linecap="round" stroke-linejoin="round"/><path d="M1480 869H1470Q1469.1 869 1469.1 869.9V879.1Q1469.1 880 1470 880H1480" fill="none" stroke="#fff" stroke-width="1.1"/><path d="M1473.4 880V883.3M1477.6 880V883.3M1472.2 883.4H1480.6" fill="none" stroke="#fff" stroke-width="1.1"/><rect x="1480.9" y="869" width="3.8" height="5.4" rx="1" fill="none" stroke="#fff" stroke-width="1.1"/><path d="M1482.8 874.4V883.9M1481.6 871H1484" fill="none" stroke="#fff" stroke-width="1.1"/><path d="M1493.8 873.8H1496.2L1499.6 870.6V881.2L1496.2 878H1493.8Z" fill="none" stroke="#fff" stroke-width="1.1" stroke-linejoin="round"/><path d="M1502 873.4Q1503.8 875.9 1502 878.4M1504.4 871.4Q1507.4 875.9 1504.4 880.4M1506.6 869.6Q1510.8 875.9 1506.6 882.2" fill="none" stroke="#fff" stroke-width="1.1" stroke-linecap="round"/></svg>
</body></html>
